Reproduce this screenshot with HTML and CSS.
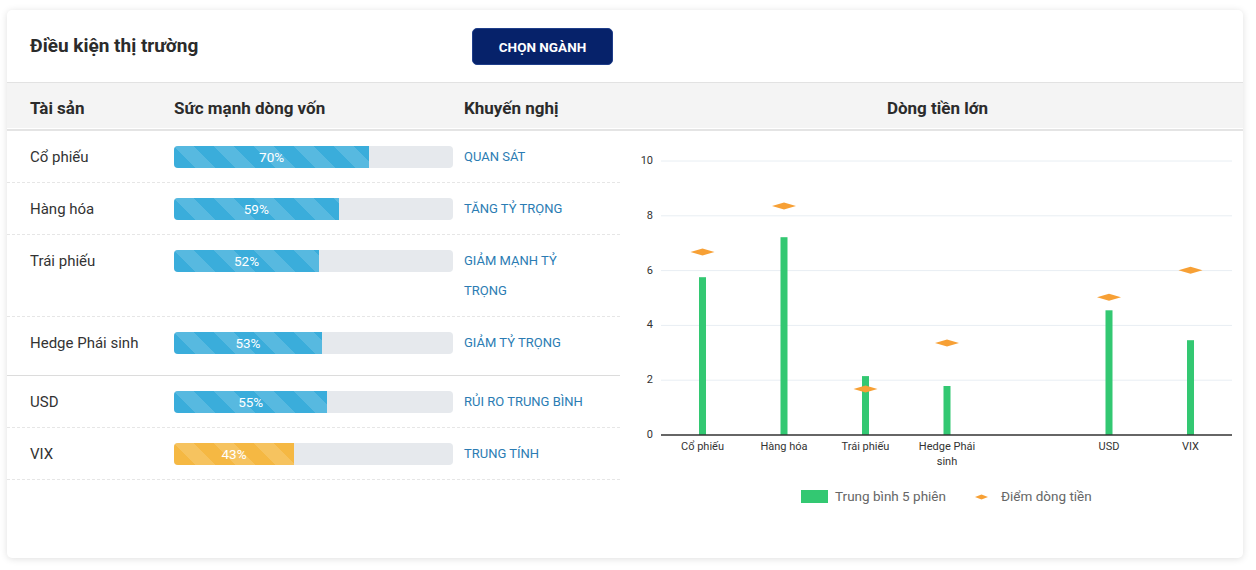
FILE: index.html
```html
<!DOCTYPE html>
<html lang="vi">
<head>
<meta charset="utf-8">
<title>Điều kiện thị trường</title>
<link rel="stylesheet" href="styles.css">
</head>
<body>
<div class="card">
  <div class="card-header">
    <h2 class="card-title">Điều kiện thị trường</h2>
    <button class="btn-primary">CHỌN NGÀNH</button>
  </div>
  <div class="thead">
    <div class="th-left">
      <div class="th">Tài sản</div>
      <div class="th">Sức mạnh dòng vốn</div>
      <div class="th">Khuyến nghị</div>
    </div>
    <div class="th th-right">Dòng tiền lớn</div>
  </div>
  <div class="tbody">
    <div class="rows">
      <div class="row">
        <div class="asset">Cổ phiếu</div>
        <div class="cell-bar"><div class="progress"><div class="fill blue" style="width:70%">70%</div></div></div>
        <div class="rec">QUAN SÁT</div>
      </div>
      <div class="row">
        <div class="asset">Hàng hóa</div>
        <div class="cell-bar"><div class="progress"><div class="fill blue" style="width:59%">59%</div></div></div>
        <div class="rec">TĂNG TỶ TRỌNG</div>
      </div>
      <div class="row">
        <div class="asset">Trái phiếu</div>
        <div class="cell-bar"><div class="progress"><div class="fill blue" style="width:52%">52%</div></div></div>
        <div class="rec">GIẢM MẠNH TỶ TRỌNG</div>
      </div>
      <div class="row row-group-end">
        <div class="asset">Hedge Phái sinh</div>
        <div class="cell-bar"><div class="progress"><div class="fill blue" style="width:53%">53%</div></div></div>
        <div class="rec">GIẢM TỶ TRỌNG</div>
      </div>
      <div class="row">
        <div class="asset">USD</div>
        <div class="cell-bar"><div class="progress"><div class="fill blue" style="width:55%">55%</div></div></div>
        <div class="rec">RỦI RO TRUNG BÌNH</div>
      </div>
      <div class="row">
        <div class="asset">VIX</div>
        <div class="cell-bar"><div class="progress"><div class="fill yellow" style="width:43%">43%</div></div></div>
        <div class="rec">TRUNG TÍNH</div>
      </div>
    </div>
    <div class="chart">
      <svg class="chart-svg" width="623" height="427" viewBox="0 0 623 427" xmlns="http://www.w3.org/2000/svg">
        <g class="grid">
          <line x1="41" y1="30" x2="612" y2="30"/>
          <line x1="41" y1="84.8" x2="612" y2="84.8"/>
          <line x1="41" y1="139.6" x2="612" y2="139.6"/>
          <line x1="41" y1="194.4" x2="612" y2="194.4"/>
          <line x1="41" y1="249.2" x2="612" y2="249.2"/>
        </g>
        <g class="ylabels">
          <text x="33" y="30">10</text>
          <text x="33" y="84.8">8</text>
          <text x="33" y="139.6">6</text>
          <text x="33" y="194.4">4</text>
          <text x="33" y="249.2">2</text>
          <text x="33" y="304">0</text>
        </g>
        <g class="bars">
          <rect x="79" y="146.2" width="7" height="157.8"/>
          <rect x="160.5" y="106.2" width="7" height="197.8"/>
          <rect x="242" y="245.1" width="7" height="58.9"/>
          <rect x="323.5" y="255" width="7" height="49"/>
          <rect x="485.5" y="179.3" width="7" height="124.7"/>
          <rect x="567" y="209.2" width="7" height="94.8"/>
        </g>
        <line class="axis" x1="41" y1="304" x2="612" y2="304"/>
        <g class="markers">
          <polygon points="70.5,121 82.5,117.5 94.5,121 82.5,124.5"/>
          <polygon points="152,75 164,71.5 176,75 164,78.5"/>
          <polygon points="233.5,258 245.5,254.5 257.5,258 245.5,261.5"/>
          <polygon points="315,212 327,208.5 339,212 327,215.5"/>
          <polygon points="477,166.2 489,162.7 501,166.2 489,169.7"/>
          <polygon points="558.5,139.3 570.5,135.8 582.5,139.3 570.5,142.8"/>
        </g>
        <g class="xlabels">
          <text x="82.5" y="316">Cổ phiếu</text>
          <text x="164" y="316">Hàng hóa</text>
          <text x="245.5" y="316">Trái phiếu</text>
          <text x="327" y="316">Hedge Phái</text>
          <text x="327" y="331">sinh</text>
          <text x="489" y="316">USD</text>
          <text x="570.5" y="316">VIX</text>
        </g>
        <g class="legend">
          <rect x="181" y="359" width="27" height="13" class="lg-bar"/>
          <text x="215" y="366">Trung bình 5 phiên</text>
          <polygon class="lg-marker" points="355,366 361.5,363.5 368,366 361.5,368.5"/>
          <text x="381" y="366">Điểm dòng tiền</text>
        </g>
      </svg>
    </div>
  </div>
</div>
</body>
</html>
```
FILE: styles.css
```css
* { box-sizing: border-box; }

html, body {
  margin: 0;
  padding: 0;
  background: #ffffff;
}

body {
  font-family: Roboto, "Noto Sans", "Liberation Sans", sans-serif;
  color: #333;
  padding: 10px 13px 12px 7px;
}

.card {
  background: #fff;
  border-radius: 5px;
  box-shadow: 0 1px 7px rgba(0, 0, 0, 0.13);
  height: 548px;
  overflow: hidden;
}

.card-header {
  display: flex;
  align-items: center;
  height: 73px;
  padding-left: 23px;
  border-bottom: 1px solid #e2e2e2;
}

.card-title {
  margin: 0 0 2px;
  width: 442px;
  font-size: 19px;
  font-weight: 700;
  color: #2b2b2b;
}

.btn-primary {
  width: 141px;
  height: 37px;
  margin-top: 1px;
  background: #06226a;
  border: 1px solid #1f3e8a;
  border-radius: 5px;
  color: #fff;
  font-family: Roboto, "Liberation Sans", sans-serif;
  font-size: 13.5px;
  font-weight: 700;
  cursor: pointer;
}

.thead {
  display: grid;
  grid-template-columns: 613px 1fr;
  height: 48px;
  background: linear-gradient(to bottom, #f4f4f4 0, #f4f4f4 45px, #fff 45px);
  border-bottom: 2px solid #e4e4e4;
}

.th-left {
  display: grid;
  grid-template-columns: 144px 290px 1fr;
  padding-left: 23px;
}

.th {
  font-size: 17px;
  font-weight: 700;
  color: #2b2b2b;
  line-height: 46px;
  padding-top: 2px;
}

.th-right {
  text-align: center;
  padding-left: 12px;
}

.tbody {
  display: grid;
  grid-template-columns: 613px 1fr;
}

.row {
  display: grid;
  grid-template-columns: 144px 290px 1fr;
  padding: 11px 0 10px 23px;
  border-bottom: 1px dashed #e6e6e6;
  line-height: 30px;
}

.row-group-end {
  padding-bottom: 17px;
  border-bottom: 1px solid #dcdcdc;
}

.asset {
  font-size: 15px;
  color: #333;
}

.cell-bar {
  padding-top: 4px;
}

.progress {
  width: 279px;
  height: 22px;
  background: #e6e9ed;
  border-radius: 4px;
  overflow: hidden;
}

.fill {
  height: 22px;
  line-height: 22px;
  text-align: center;
  color: #fff;
  font-size: 13.5px;
  font-weight: 400;
  background-size: 40px 40px;
}

.fill.blue {
  background-color: #3aaddb;
  background-image: linear-gradient(45deg,
    rgba(255,255,255,0.15) 25%, transparent 25%,
    transparent 50%, rgba(255,255,255,0.15) 50%,
    rgba(255,255,255,0.15) 75%, transparent 75%, transparent);
}

.fill.yellow {
  background-color: #f5b843;
  background-image: linear-gradient(45deg,
    rgba(255,255,255,0.15) 25%, transparent 25%,
    transparent 50%, rgba(255,255,255,0.15) 50%,
    rgba(255,255,255,0.15) 75%, transparent 75%, transparent);
}

.rec {
  font-size: 13px;
  color: #2b7cb3;
  max-width: 125px;
}

.chart {
  position: relative;
}

.chart-svg {
  display: block;
  font-family: Roboto, "Liberation Sans", sans-serif;
}

.grid line {
  stroke: #e8eef3;
  stroke-width: 1;
}

.axis {
  stroke: #333;
  stroke-width: 1.5;
}

.ylabels text {
  font-size: 11px;
  fill: #333;
  text-anchor: end;
  dominant-baseline: middle;
}

.xlabels text {
  font-size: 11px;
  fill: #333;
  text-anchor: middle;
  dominant-baseline: middle;
}

.bars rect, .lg-bar {
  fill: #33c872;
}

.markers polygon, .lg-marker {
  fill: #f7a035;
}

.legend text {
  font-size: 13.5px;
  fill: #666;
  dominant-baseline: middle;
}
```
